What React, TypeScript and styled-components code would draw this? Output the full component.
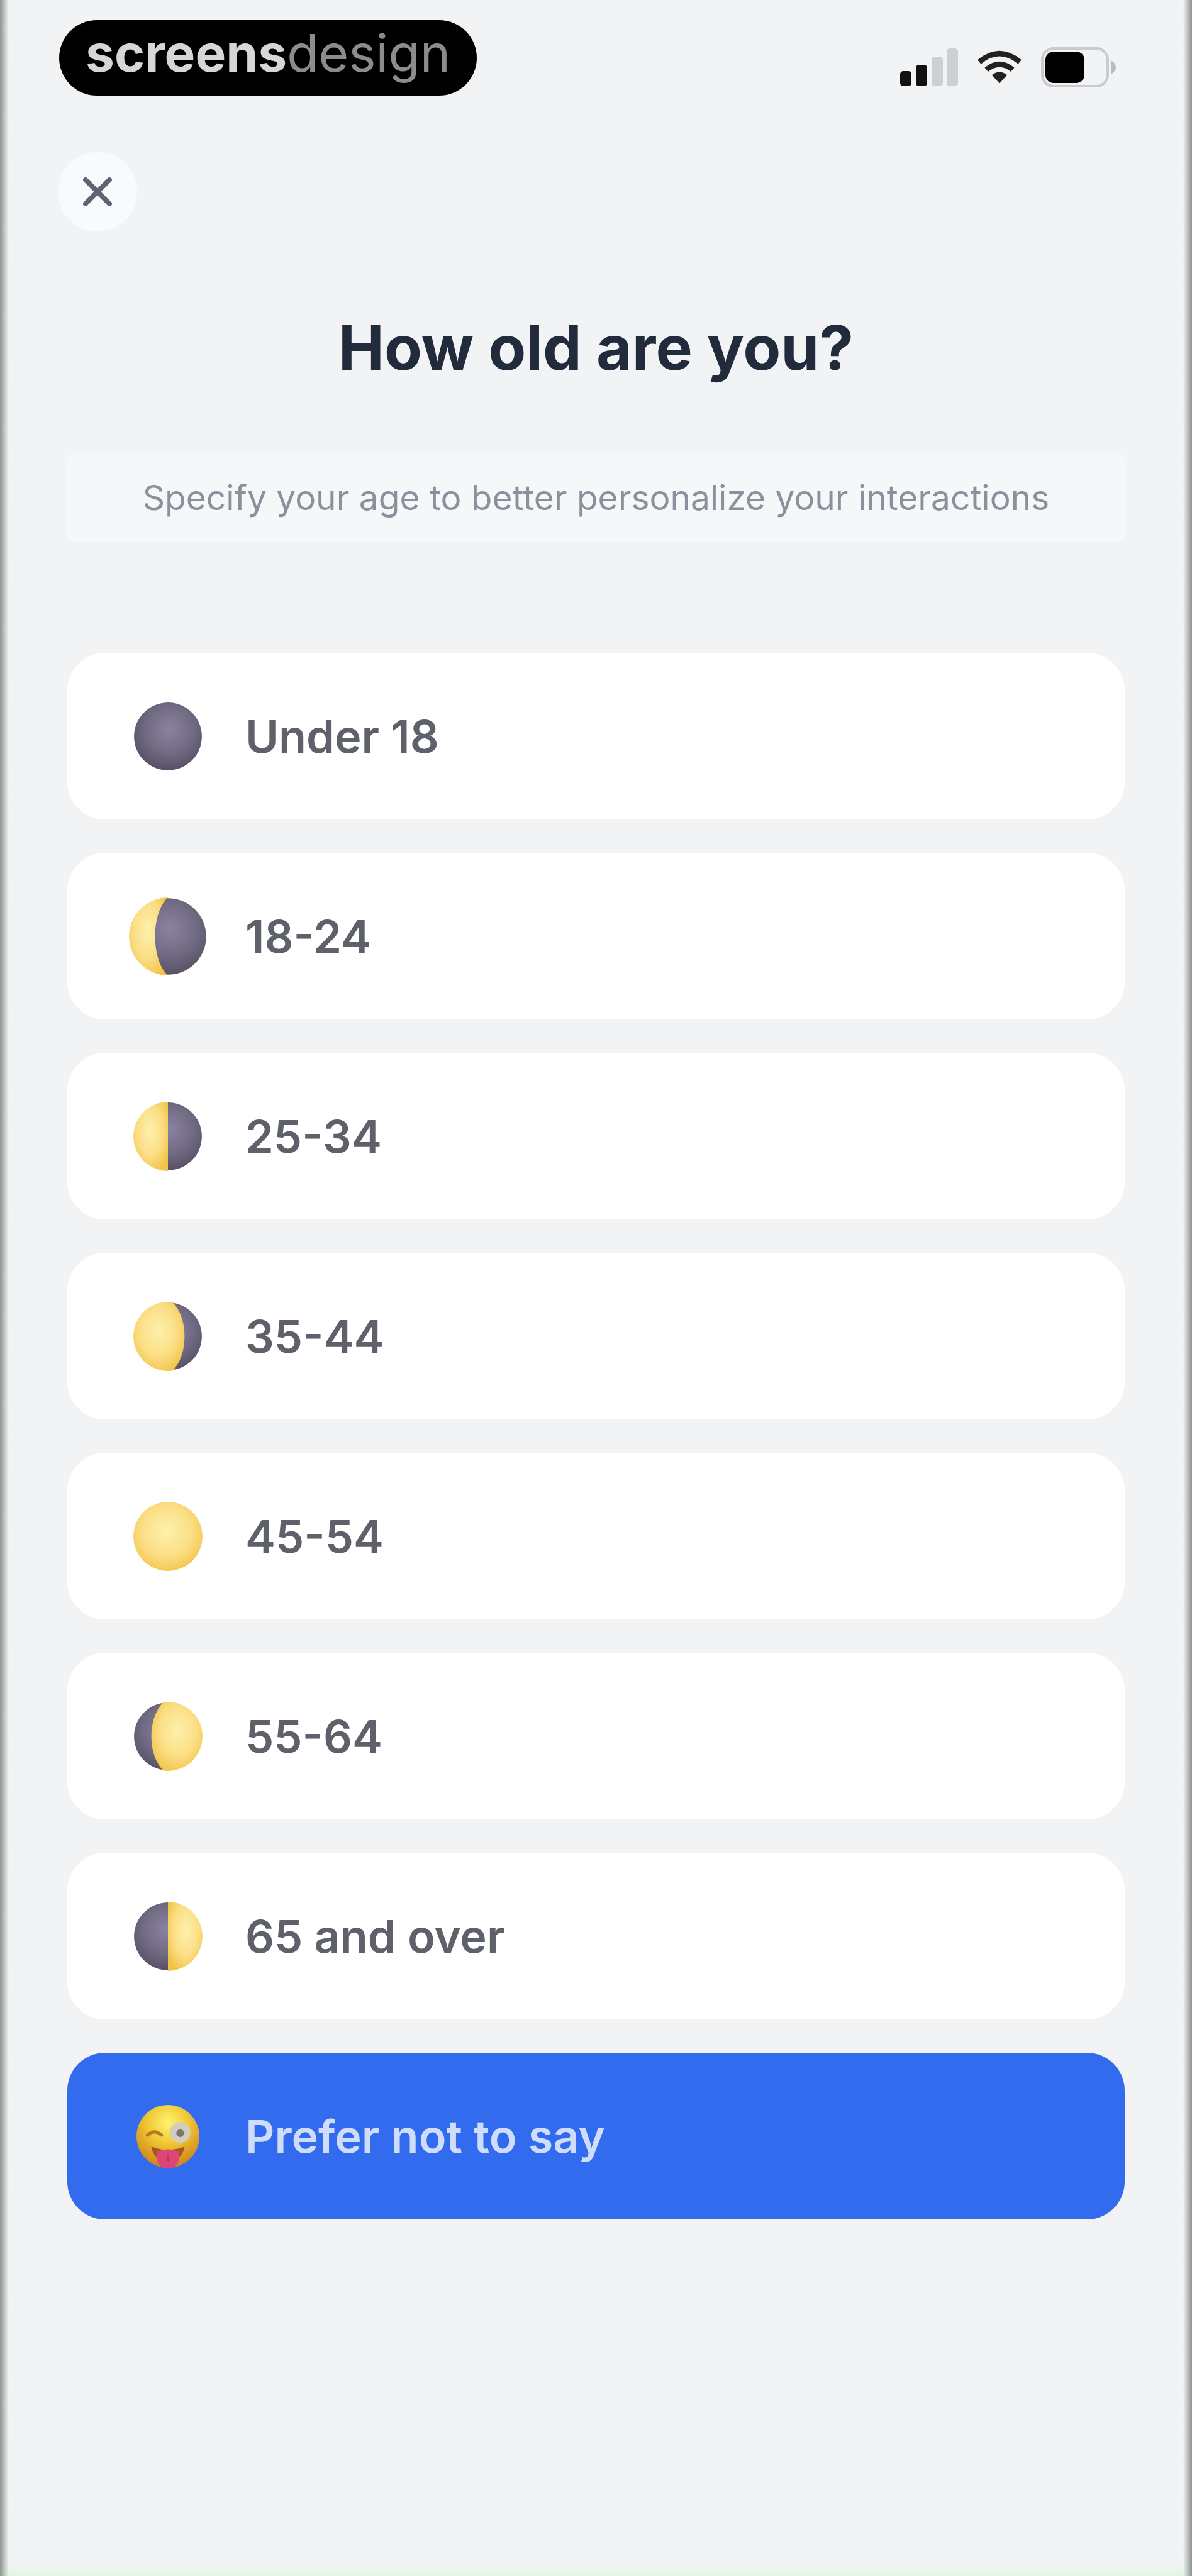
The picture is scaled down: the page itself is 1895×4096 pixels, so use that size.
import { useState } from "react";
import styled, { createGlobalStyle } from "styled-components";

type Phase = "new" | "crescent" | "half" | "gibbous" | "full";

type Option = {
  label: string;
  phase?: Phase;
  flipped?: boolean;
};

const OPTIONS: Option[] = [
  { label: "Under 18", phase: "new" },
  { label: "18-24", phase: "crescent" },
  { label: "25-34", phase: "half" },
  { label: "35-44", phase: "gibbous" },
  { label: "45-54", phase: "full" },
  { label: "55-64", phase: "gibbous", flipped: true },
  { label: "65 and over", phase: "half", flipped: true },
  { label: "Prefer not to say" },
];

// lit part of the disc, light coming from the left
const LIT: Record<Phase, string> = {
  new: "",
  crescent: "M50 0A50 50 0 0 0 50 100C28 80 28 20 50 0Z",
  half: "M50 0A50 50 0 0 0 50 100Z",
  gibbous: "M50 0A50 50 0 0 0 50 100H56C80 78 80 22 56 0Z",
  full: "M50 0A50 50 0 0 0 50 100A50 50 0 0 0 50 0Z",
};

const Moon = ({ phase, flipped }: { phase: Phase; flipped?: boolean }) => {
  const id = `${phase}${flipped ? "-flipped" : ""}`;
  const size = phase === "crescent" ? 124 : 110;
  return (
    <svg width={size} height={size} viewBox="0 0 100 100" aria-hidden="true">
      <defs>
        <radialGradient
          id={`dark-${id}`}
          gradientUnits="userSpaceOnUse"
          cx="52"
          cy="40"
          r="60"
        >
          <stop offset="0" stopColor="#8b84a0" />
          <stop offset="0.6" stopColor="#6f6981" />
          <stop offset="1" stopColor="#575064" />
        </radialGradient>
        <radialGradient id={`lit-${id}`} cx="48%" cy="42%" r="65%">
          <stop offset="0" stopColor="#fdf0ad" />
          <stop offset="0.55" stopColor="#fbdf86" />
          <stop offset="1" stopColor="#f3c145" />
        </radialGradient>
        <clipPath id={`disc-${id}`}>
          <circle cx="50" cy="50" r="50" />
        </clipPath>
      </defs>
      <g
        clipPath={`url(#disc-${id})`}
        transform={flipped ? "translate(100 0) scale(-1 1)" : undefined}
      >
        {phase !== "full" && (
          <circle cx="50" cy="50" r="49" fill={`url(#dark-${id})`} />
        )}
        {LIT[phase] && <path d={LIT[phase]} fill={`url(#lit-${id})`} />}
      </g>
    </svg>
  );
};

const WinkFace = () => (
  <svg width="102" height="102" viewBox="0 0 100 100" aria-hidden="true">
    <defs>
      <radialGradient id="face" cx="50%" cy="28%" r="70%">
        <stop offset="0" stopColor="#fdf66e" />
        <stop offset="0.5" stopColor="#efc433" />
        <stop offset="1" stopColor="#cf8420" />
      </radialGradient>
    </defs>
    <circle cx="50" cy="50" r="49" fill="url(#face)" />
    <path
      d="M18 48Q29 38 40 48"
      fill="none"
      stroke="#b87a1c"
      strokeWidth="5"
      strokeLinecap="round"
    />
    <circle cx="69" cy="44" r="16" fill="#d2cdbd" />
    <circle cx="69" cy="45" r="6" fill="#7f7468" />
    <path d="M24 66Q50 76 76 66Q72 88 50 88Q28 88 24 66Z" fill="#a8541e" />
    <path d="M33 74Q50 66 67 74V84Q66 100 50 100Q34 100 33 84Z" fill="#dc4674" />
    <path d="M50 78V90" stroke="#bd3a66" strokeWidth="3" />
  </svg>
);

const SignalIcon = () => (
  <svg width="92" height="60" viewBox="0 0 92 60" aria-hidden="true">
    <rect x="0" y="36" width="18" height="24" rx="5" fill="#111" />
    <rect x="25" y="26" width="18" height="34" rx="5" fill="#111" />
    <rect x="50" y="13" width="18" height="47" rx="5" fill="#cdcfd1" />
    <rect x="74" y="0" width="18" height="60" rx="5" fill="#cdcfd1" />
  </svg>
);

const WifiIcon = () => (
  <svg width="72" height="56" viewBox="0 0 76 56" aria-hidden="true">
    <g fill="none" stroke="#222" strokeWidth="9">
      <path d="M4 19Q38 -9 72 19" />
      <path d="M16 32Q38 14 60 32" />
    </g>
    <path d="M25 41Q38 31 51 41L38 55Z" fill="#222" />
  </svg>
);

const BatteryIcon = () => (
  <svg width="120" height="64" viewBox="0 0 120 64" aria-hidden="true">
    <rect
      x="2"
      y="2"
      width="104"
      height="60"
      rx="18"
      fill="none"
      stroke="#c9cbcf"
      strokeWidth="4"
    />
    <rect x="7" y="7" width="62" height="50" rx="13" fill="#000" />
    <path d="M111 21Q119 25 119 32T111 43Z" fill="#b9bbc2" />
  </svg>
);

const CloseIcon = () => (
  <svg width="46" height="46" viewBox="0 0 46 46" aria-hidden="true">
    <path
      d="M4 4L42 42M42 4L4 42"
      stroke="#5f6475"
      strokeWidth="8"
      strokeLinecap="round"
    />
  </svg>
);

const App = () => {
  const [selected, setSelected] = useState("Prefer not to say");

  return (
    <Page>
      <GlobalStyle />
      <StatusBar>
        <Brand>
          <strong>screens</strong>design
        </Brand>
        <StatusIcons>
          <SignalIcon />
          <WifiIcon />
          <BatteryIcon />
        </StatusIcons>
      </StatusBar>
      <Nav>
        <CloseButton aria-label="Close">
          <CloseIcon />
        </CloseButton>
      </Nav>
      <Content>
        <Title>How old are you?</Title>
        <Hint>Specify your age to better personalize your interactions</Hint>
        <Options>
          {OPTIONS.map((o) => (
            <OptionButton
              key={o.label}
              $active={o.label === selected}
              aria-pressed={o.label === selected}
              onClick={() => setSelected(o.label)}
            >
              <OptionIcon>
                {o.phase ? (
                  <Moon phase={o.phase} flipped={o.flipped} />
                ) : (
                  <WinkFace />
                )}
              </OptionIcon>
              {o.label}
            </OptionButton>
          ))}
        </Options>
      </Content>
    </Page>
  );
};
export default App;

const GlobalStyle = createGlobalStyle`
  *, *::before, *::after {
    box-sizing: border-box;
  }

  body {
    margin: 0;
    background: #f1f3f5;
    font-family: Inter, "Liberation Sans", sans-serif;
  }
`;

const Page = styled.div`
  min-height: 100vh;
  background:
    linear-gradient(to right, #949694, rgba(241, 243, 245, 0)) left / 14px 100%
      no-repeat,
    linear-gradient(to left, #8f928f, rgba(241, 243, 245, 0)) right / 14px 100%
      no-repeat,
    linear-gradient(to top, #e0f8e0, rgba(241, 243, 245, 0)) bottom / 100% 16px
      no-repeat,
    #f1f3f5;
`;

const StatusBar = styled.header`
  display: flex;
  align-items: center;
  justify-content: space-between;
  padding: 32px 120px 0 94px;
`;

const Brand = styled.div`
  height: 120px;
  padding: 0 42px;
  border-radius: 60px;
  background: #000;
  color: #8c8c8c;
  font-size: 82px;
  font-weight: 400;
  line-height: 106px;

  strong {
    color: #d6d6d6;
    font-weight: 700;
  }
`;

const StatusIcons = styled.div`
  display: flex;
  align-items: center;
  gap: 30px;
  padding-top: 30px;
`;

const Nav = styled.nav`
  padding: 90px 92px 0;
`;

const CloseButton = styled.button`
  display: flex;
  align-items: center;
  justify-content: center;
  width: 126px;
  height: 126px;
  padding: 0;
  border: 0;
  border-radius: 50%;
  background: #f9fafc;
`;

const Content = styled.main`
  padding: 120px 107px;
`;

const Title = styled.h1`
  margin: 0;
  color: #222b3c;
  font-size: 98px;
  font-weight: 700;
  line-height: 130px;
  text-align: center;
`;

const Hint = styled.p`
  margin: 102px 0 0;
  padding: 36px 0;
  border-radius: 12px;
  background: #f5f7f9;
  color: #8d909c;
  font-size: 55px;
  line-height: 70px;
  text-align: center;
`;

const Options = styled.div`
  display: flex;
  flex-direction: column;
  gap: 53px;
  margin-top: 176px;
`;

const OptionButton = styled.button<{ $active: boolean }>`
  display: flex;
  align-items: center;
  gap: 60px;
  height: 265px;
  padding: 0 97px;
  border: 0;
  border-radius: 60px;
  background: ${(p) => (p.$active ? "#336bef" : "#fff")};
  color: ${(p) => (p.$active ? "#cfddfb" : "#5f616a")};
  font-family: inherit;
  font-size: 72px;
  font-weight: 600;
  text-align: left;
`;

const OptionIcon = styled.span`
  display: flex;
  align-items: center;
  justify-content: center;
  width: 126px;
`;
